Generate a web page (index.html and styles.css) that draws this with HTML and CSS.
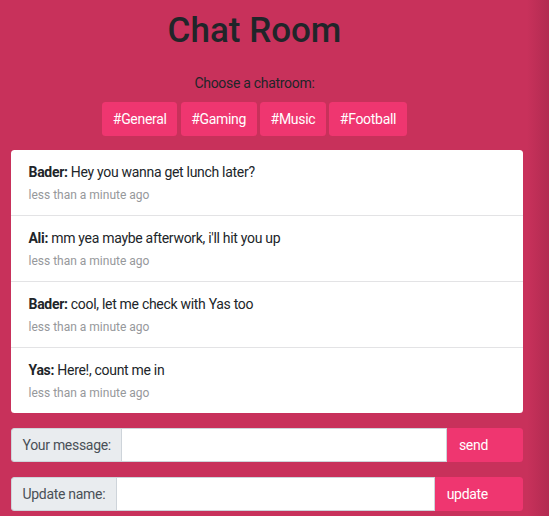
FILE: index.html
```html
<!DOCTYPE html>
<html>
<head>
<meta charset="utf-8">
<link rel="stylesheet" href="styles.css">
</head>
<body>
<div class="main">
  <header class="head">
    <h1 class="title">Chat Room</h1>
    <p class="choose">Choose a chatroom:</p>
    <div class="rooms">
      <button class="btn">#General</button>
      <button class="btn">#Gaming</button>
      <button class="btn">#Music</button>
      <button class="btn">#Football</button>
    </div>
  </header>
  <ul class="messages">
    <li class="msg"><div class="text"><b>Bader:</b> Hey you wanna get lunch later?</div><div class="time">less than a minute ago</div></li>
    <li class="msg"><div class="text"><b>Ali:</b> mm yea maybe afterwork, i'll hit you up</div><div class="time">less than a minute ago</div></li>
    <li class="msg"><div class="text"><b>Bader:</b> cool, let me check with Yas too</div><div class="time">less than a minute ago</div></li>
    <li class="msg"><div class="text"><b>Yas:</b> Here!, count me in</div><div class="time">less than a minute ago</div></li>
  </ul>
  <form class="group">
    <span class="label">Your message:</span>
    <input class="field" type="text">
    <button class="btn side" type="button">send</button>
  </form>
  <form class="group">
    <span class="label">Update name:</span>
    <input class="field" type="text">
    <button class="btn side" type="button">update</button>
  </form>
</div>
</body>
</html>
```
FILE: styles.css
```css
html, body { margin: 0; padding: 0; }
body {
  height: 516px;
  overflow: hidden;
  font-family: Roboto, "Liberation Sans", sans-serif;
  font-size: 14px;
  line-height: 21px;
  letter-spacing: -0.3px;
  color: #212529;
  background: linear-gradient(to right, #c8315b 0, #c8315b 527px, #b22b51 549px);
}
.main {
  width: 512px;
  padding: 10px 11px 0;
}
.head {
  padding-right: 25px;
  width: 487px;
}
.title {
  margin: 0;
  font-size: 35px;
  line-height: 42px;
  font-weight: 500;
  letter-spacing: 0;
  text-align: center;
}
.choose {
  margin: 21px 0 0;
  text-align: center;
  line-height: 21px;
}
.rooms {
  margin-top: 8px;
  display: flex;
  justify-content: center;
  gap: 3.5px;
}
.btn {
  font-family: inherit;
  font-size: 14px;
  letter-spacing: -0.3px;
  color: #fff;
  background: #ef3670;
  border: none;
  border-radius: 3.5px;
  height: 34px;
  padding: 0 10.5px;
  cursor: pointer;
}
.messages {
  list-style: none;
  margin: 14px 0 0;
  padding: 0;
  background: #fff;
  border-radius: 3.5px;
}
.msg {
  padding: 11.5px 17.5px 11px;
  border-bottom: 1px solid #e3e3e5;
}
.msg:last-child { border-bottom: none; }
.text { line-height: 21px; }
.text b { font-weight: 700; }
.time {
  margin-top: 3.5px;
  font-size: 12px;
  line-height: 18px;
  letter-spacing: 0;
  color: #96989b;
}
.group {
  display: flex;
  margin: 15px 0 0;
  height: 34px;
}
.label {
  display: flex;
  align-items: center;
  padding: 0 10.5px;
  background: #e9ecef;
  color: #495057;
  border: 1px solid #ced4da;
  border-right: none;
  border-radius: 3.5px 0 0 3.5px;
}
.field {
  flex: 1;
  min-width: 0;
  margin: 0;
  border: 1px solid #ced4da;
  background: #fff;
  padding: 0 10px;
  height: 34px;
  box-sizing: border-box;
}
.side {
  border-radius: 0 3.5px 3.5px 0;
  padding: 0 35px 0 12px;
}
```
